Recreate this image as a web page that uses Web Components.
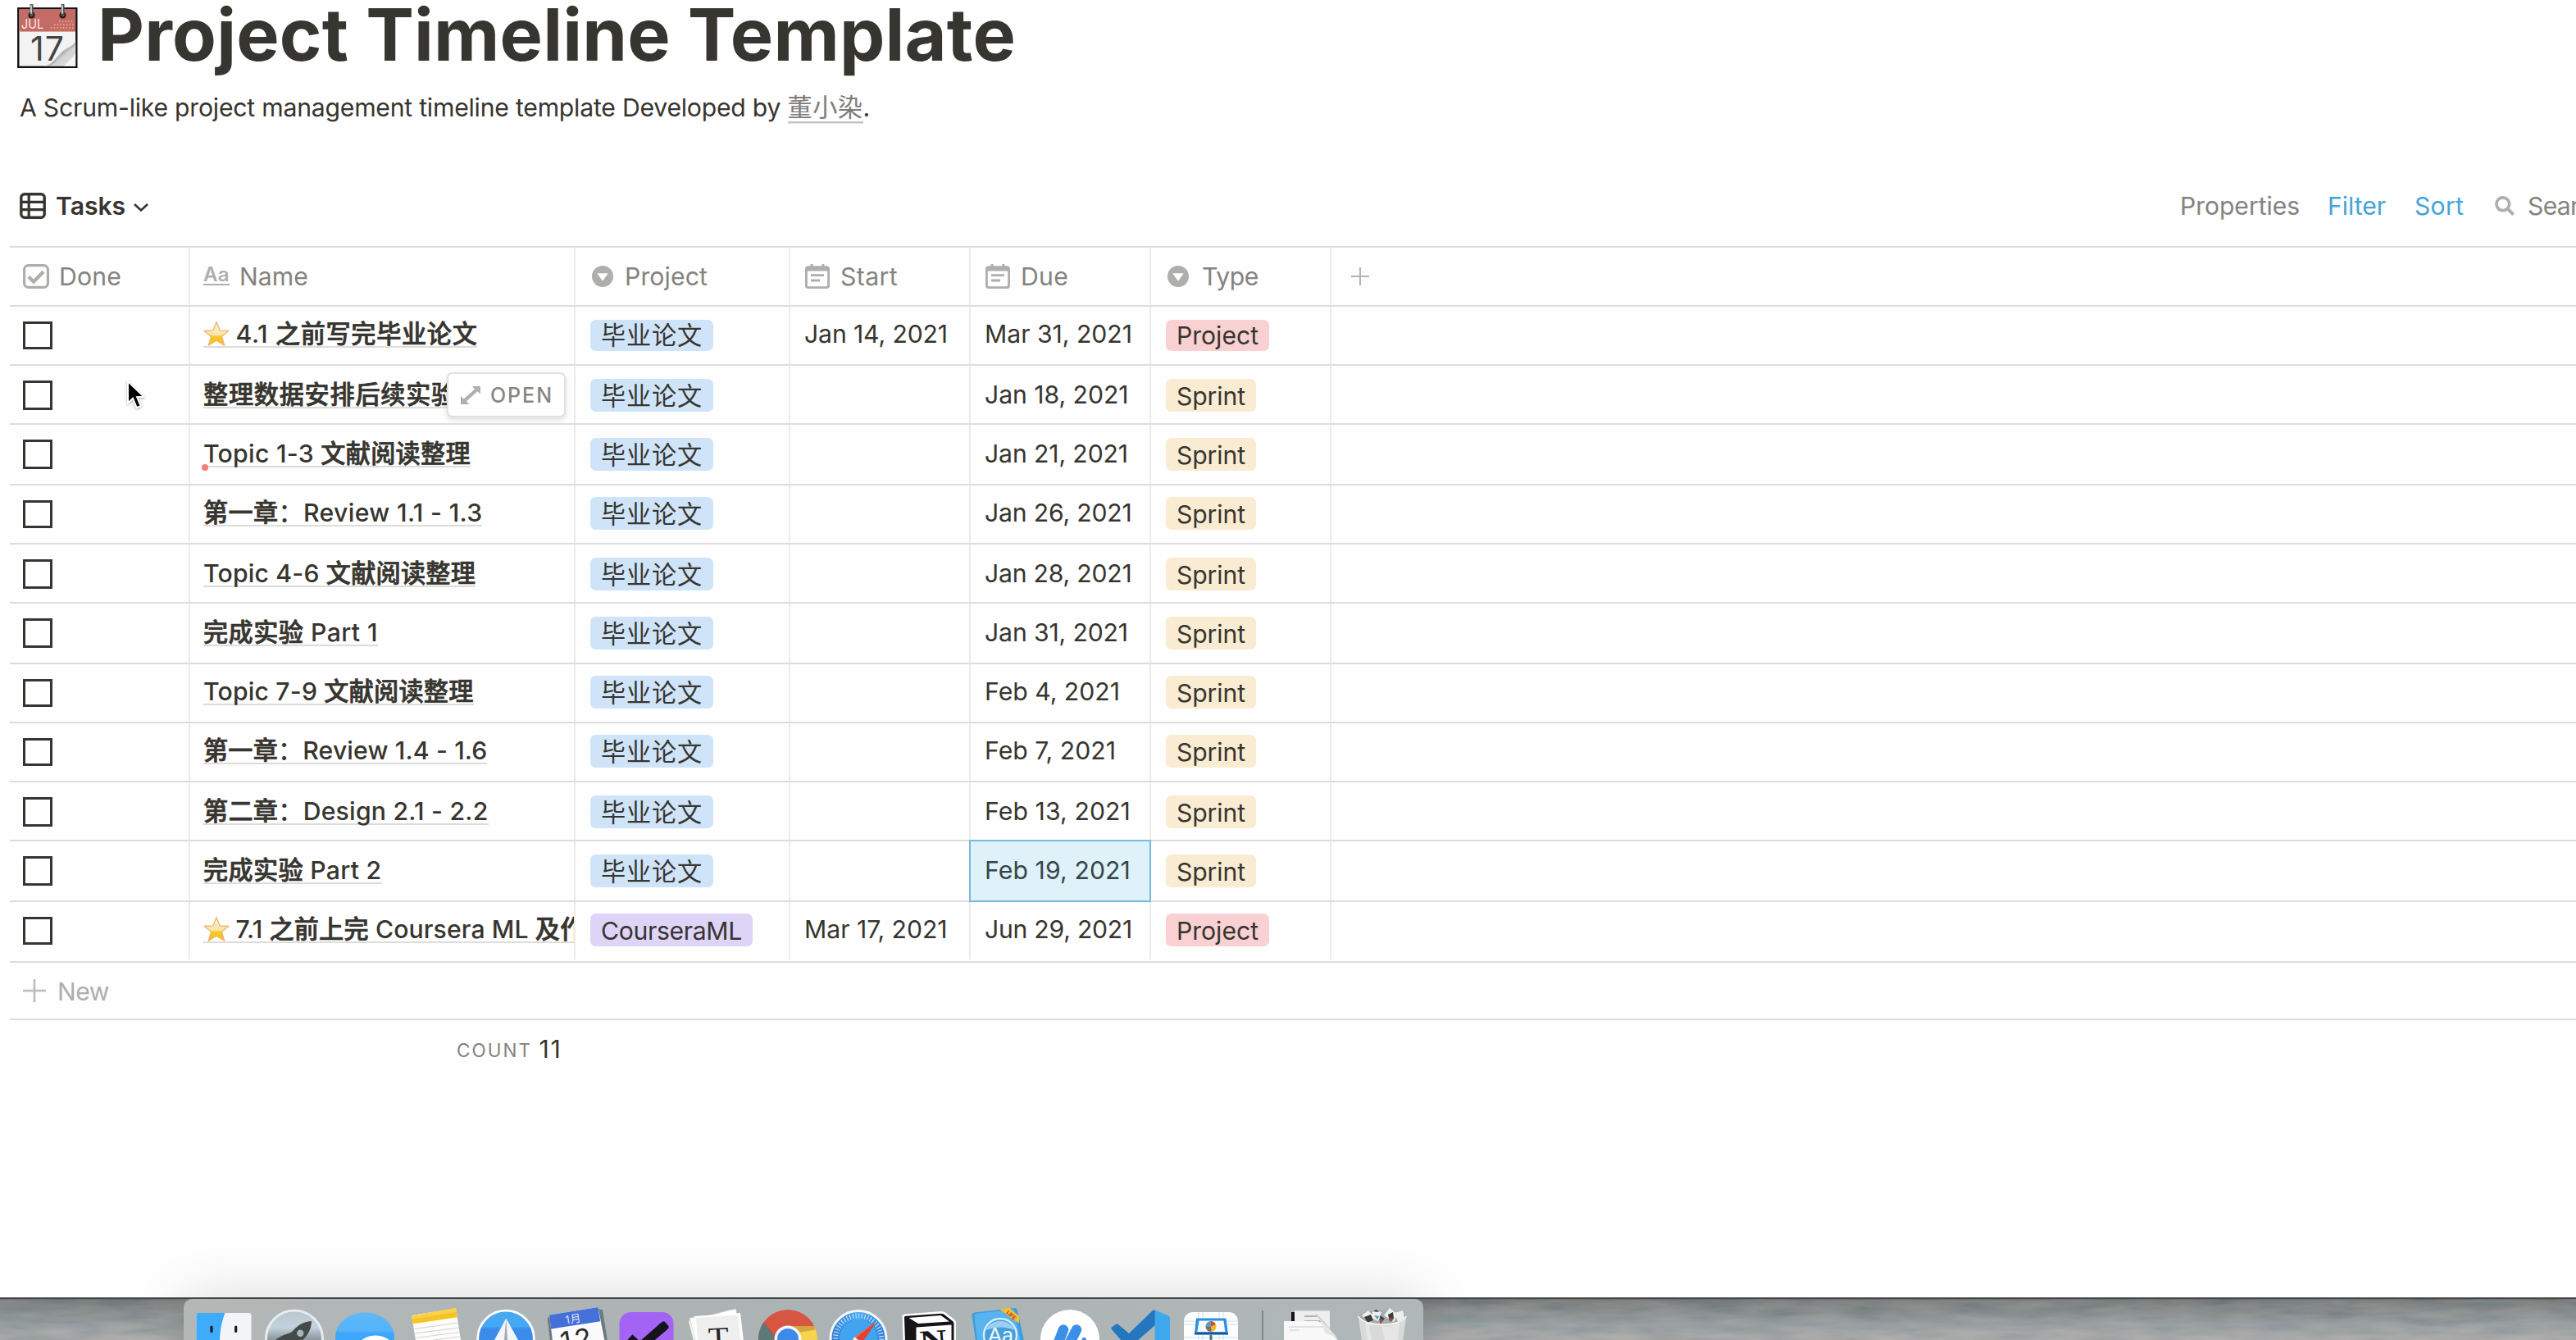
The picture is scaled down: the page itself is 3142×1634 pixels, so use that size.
<!DOCTYPE html>
<html lang="en">
<head>
<meta charset="utf-8">
<title>Project Timeline Template</title>
<style>
html,body{margin:0;height:100%}
body{width:3142px;height:1634px;overflow:hidden;background:#fefefe;color:#37352f;font-family:Inter,"Noto Sans CJK SC",sans-serif;font-size:30.2px;line-height:40px}
</style>
</head>
<body>
<timeline-app></timeline-app>
<script>
const define = (name, html, after) => customElements.define(name, class extends HTMLElement {
  constructor(){ super(); this.attachShadow({mode:'open'}); }
  connectedCallback(){
    this.shadowRoot.innerHTML = typeof html === 'function' ? html(this) : html;
    if (after) after(this);
  }
});

/* Text whose tracking is adjusted so that its advance equals the w attribute */
define('fit-text', `<style>:host{display:inline-block;white-space:pre;flex:none}span{display:inline-block}</style><span><slot></slot></span>`, el => {
  const w = +el.getAttribute('w'), n = [...el.textContent].length;
  const natural = el.shadowRoot.querySelector('span').getBoundingClientRect().width;
  if (w && n) el.style.letterSpacing = ((w - natural) / n).toFixed(3) + 'px';
});

const ICONS = {
  table: ['0 0 32 32', `<rect x="1.8" y="1.8" width="28.4" height="28.4" rx="4" fill="none" stroke="#37352f" stroke-width="3.4"/><path d="M2 11.3H30M2 20.7H30M11.2 2V30" stroke="#37352f" stroke-width="3.2" fill="none"/>`],
  chevron: ['0 0 20 12', `<path d="M2 2l8 7.5L18 2" fill="none" stroke="#37352f" stroke-width="2.6"/>`],
  search: ['0 0 24 24', `<circle cx="9.8" cy="9.8" r="7.9" fill="none" stroke="#aeaeac" stroke-width="3.6"/><path d="M15.6 15.6l7 7" stroke="#aeaeac" stroke-width="4"/>`],
  check: ['0 0 32 30', `<rect x="1.6" y="1.6" width="28.8" height="26.8" rx="5" fill="none" stroke="#aeaeac" stroke-width="3.2"/><path d="M6.8 15.5l6.2 6L25 9.3" fill="none" stroke="#aeaeac" stroke-width="4.4"/>`],
  select: ['0 0 26 26', `<circle cx="13" cy="13" r="13" fill="#aeaeac"/><path d="M6.2 9.2h13.6L13 18.8z" fill="#fff"/>`],
  date: ['0 0 30 30', `<path d="M4 2.2h2.6V0h3v2.2h10.8V0h3v2.2H26a4 4 0 0 1 4 4V26a4 4 0 0 1-4 4H4a4 4 0 0 1-4-4V6.200a4 4 0 0 1 4-4zM2.800 8.600V25.500a1.700 1.700 0 0 0 1.700 1.700h21a1.700 1.700 0 0 0 1.700-1.700V8.600z" fill="#aeaeac" fill-rule="evenodd"/><path d="M7 13.600h16M7 20h11" stroke="#aeaeac" stroke-width="2.800"/>`],
  plus: ['0 0 24 24', `<path d="M12 1v22M1 12h22" stroke="#b4b4b2" stroke-width="2"/>`],
  plusb: ['0 0 28 28', `<path d="M14 0v28M0 14h28" stroke="#bcbcba" stroke-width="2.6"/>`],
  open: ['0 0 24 22', `<path d="M14 0h10v9.500l-3.600-3.300L7 18.200 10.500 22H0V12l3.800 3.400L17 3.400z" fill="#b0b0ae"/>`],
  star: ['0 0 32 32', `<defs><linearGradient id="s" x1="0" y1="0" x2="0" y2="1"><stop offset="0" stop-color="#fdf3e6"/><stop offset=".55" stop-color="#fbe3a8"/><stop offset=".62" stop-color="#f8c822"/><stop offset="1" stop-color="#f6bd2a"/></linearGradient></defs><path d="M16 1.500l4 10.300 11 .5-8.500 6.900 3.200 11L16 24.200 6.300 30.200l3.200-11L1 12.300l11-.5z" fill="url(#s)" stroke="#e9b868" stroke-width="1.300" stroke-linejoin="round"/>`]
};
define('ui-icon', el => {
  const [vb, body] = ICONS[el.getAttribute('name')], [, , w, h] = vb.split(' ');
  return `<style>:host{display:block;flex:none;line-height:0}svg{display:block}</style><svg width="${w}" height="${h}" viewBox="${vb}">${body}</svg>`;
});

define('calendar-emoji', `<style>:host{display:block;width:76px;height:80px;flex:none}svg{display:block}</style>
<svg width="76" height="80" viewBox="20 5 76 80">
<defs><linearGradient id="c" x1=".35" y1=".4" x2="1" y2="1"><stop offset="0" stop-color="#777"/><stop offset=".3" stop-color="#ddd"/><stop offset="1" stop-color="#fff"/></linearGradient>
<linearGradient id="d" x1="0" y1="0" x2="1" y2="1"><stop offset=".4" stop-color="#fff"/><stop offset=".6" stop-color="#999"/><stop offset="1" stop-color="#444"/></linearGradient></defs>
<rect x="22.300" y="10.300" width="71" height="71.500" fill="#f3f3f3" stroke="#111" stroke-width="2.400"/>
<rect x="23.500" y="11.500" width="68.600" height="26.500" fill="#c46b67"/><path d="M23.500 38.500h68.600" stroke="#dba98c" stroke-width="1.200"/>
<text x="26" y="34.800" font-family="Inter" font-size="16" fill="#f9e9e7" textLength="27" lengthAdjust="spacingAndGlyphs">JUL</text>
<path d="M62 34h28M66 30h24M72 26h18" stroke="#e8b98c" stroke-width="1.400" stroke-dasharray="1.500 2.200"/>
<path d="M92.200 50C88 58 82 57 75 63 68 70 66 77 55 80.600H92.200z" fill="url(#d)"/>
<text x="37" y="74" font-family="Inter" font-size="41" fill="#444" textLength="41" lengthAdjust="spacing">17</text>
<path d="M92.200 54C86 61 80 59 75 65 70 72 67 78 58 80.600H92.200z" fill="url(#c)" opacity=".85"/><path d="M92 66L78 80.600h14z" fill="#f6f6f6"/>
<g><circle cx="38.500" cy="18.500" r="4" fill="#2a2020"/><circle cx="76.500" cy="18.500" r="4" fill="#2a2020"/><path d="M38.500 6v12M76.500 6v12" stroke="#555" stroke-width="4" stroke-linecap="round"/><path d="M38 7v9M76 7v9" stroke="#d5dadc" stroke-width="1.700" stroke-linecap="round"/></g>
</svg>`);

define('page-header', `<style>
:host{display:block}
.title{display:flex;align-items:flex-start;gap:23px;padding:5px 0 0 20px;height:101px}
h1{margin:0;font-size:88px;font-weight:700;line-height:74px}
p{margin:0;padding:0 0 0 24px;height:40px;display:flex;margin-top:5px}
.link{color:#7d7c78;background:linear-gradient(#c6c5c3,#c6c5c3) 0 37px/100% 2.500px no-repeat}
</style>
<div class="title"><calendar-emoji></calendar-emoji><h1><fit-text w="1120">Project Timeline Template</fit-text></h1></div>
<p><fit-text w="936.500">A Scrum-like project management timeline template Developed by </fit-text><fit-text class="link" w="92">董小染</fit-text><span>.</span></p>`);

define('view-bar', `<style>
:host{display:flex;align-items:flex-start;height:69px;padding:0 0 0 24px;margin-top:80px;white-space:nowrap}
.v{font-weight:600;margin-left:12px}
ui-icon{margin-top:4px}
.sp{flex:none;width:2477px}
.g{color:#84837f}.b{color:#47a3d9}
.bar{display:flex;width:600px;flex:none}
ui-icon[name=chevron]{margin:16px 0 0 9px}
ui-icon[name=search]{margin:8px 16px 0 38px}
</style>
<ui-icon name="table"></ui-icon><fit-text class="v" w="85">Tasks</fit-text><ui-icon name="chevron"></ui-icon><span class="sp"></span>
<div class="bar"><fit-text class="g" w="146">Properties</fit-text><fit-text class="b" w="71" style="margin-left:34px">Filter</fit-text><fit-text class="b" w="60" style="margin-left:35px">Sort</fit-text><ui-icon name="search"></ui-icon><fit-text class="g" w="96">Search</fit-text></div>`);

define('head-cell', `<style>
:host{display:flex;box-sizing:border-box;border-right:2px solid #ececeb;padding:14px 0 0 16px;color:#84837f;height:70px;flex:none;align-items:flex-start}
.t{margin:1px 0 0 var(--gap,16px)}
</style><slot name="icon"></slot><span class="t"><slot></slot></span>`);

define('type-icon', `<style>:host{display:block;font-size:24px;line-height:24px;font-weight:600;color:#aeaeac;border-bottom:2.500px solid #aeaeac;width:32px;height:23px}</style><fit-text w="32">Aa</fit-text>`);

define('option-tag', el => `<style>
:host{display:block;box-sizing:border-box;height:40px;line-height:40px;padding:1px 13px 0 13px;border-radius:6.600px;width:max-content;background:${({blue:'#cfe4f9',red:'#fad1d3',yellow:'#f9ecd3',purple:'#ded4f8'})[el.getAttribute('tone')]}}
</style><slot></slot>`);

define('check-box', `<style>:host{display:block;box-sizing:border-box;width:36px;height:36px;border:3.500px solid #37352f;background:#fff}</style>`);

const W = [220,470,262,220,220,220];
const ROWS = [
  [70,0,'4.1 之前写完毕业论文',295,1,'Jan 14, 2021',175,'Mar 31, 2021',180],
  [70,2,'整理数据安排后续实验',309,0,'',0,'Jan 18, 2021',175.5],
  [72,2,'Topic 1-3 文献阅读整理',326,0,'',0,'Jan 21, 2021',175],
  [70,0,'第一章：Review 1.1 - 1.3',340.5,0,'',0,'Jan 26, 2021',179.5],
  [70,2,'Topic 4-6 文献阅读整理',332,0,'',0,'Jan 28, 2021',179.5],
  [72,2,'完成实验 Part 1',213,0,'',0,'Jan 31, 2021',175],
  [70,0,'Topic 7-9 文献阅读整理',329.5,0,'',0,'Feb 4, 2021',165],
  [70,0,'第一章：Review 1.4 - 1.6',346.5,0,'',0,'Feb 7, 2021',160],
  [70,2,'第二章：Design 2.1 - 2.2',347.5,0,'',0,'Feb 13, 2021',178],
  [72,2,'完成实验 Part 2',217.5,0,'',0,'Feb 19, 2021',178],
  [72,0,'7.1 之前上完 Coursera ML 及作',426,1,'Mar 17, 2021',174.5,'Jun 29, 2021',180]
];
define('task-row', el => {
  const i = +el.getAttribute('index'), [h,s,name,nw,star,st,sw,due,dw] = ROWS[i];
  const last = i === 10, proj = i === 0 || last;
  return `<style>
:host{display:flex;height:${h}px;border-bottom:2px solid #dddddc;box-sizing:content-box}
.c{box-sizing:border-box;flex:none;border-right:2px solid #ececeb;height:${last ? 70 : h}px;padding:${13+s}px 0 0 17px;position:relative}
.k{padding:18px 0 0 16px}.t{padding:${i ? 14+s : 16}px 0 0 18px}
check-box{height:${s ? 36 : 34}px}
${i ? '' : 'option-tag{height:38px;padding-top:0;line-height:38px}'}
.n{padding-left:16px;overflow:hidden}
.n b{font-weight:500;-webkit-text-stroke:.7px currentColor}
.u{display:flex;width:max-content;font-weight:500;background:linear-gradient(#dcdcda,#dcdcda) 0 35px/100% 2px no-repeat}
.n ui-icon{margin:4px 7.500px 0 0}
.sel:after{content:"";position:absolute;left:-2px;top:-2px;right:-2px;bottom:-2px;border:2px solid #77bbdc;background:rgba(46,170,220,.15)}
.open{position:absolute;left:313px;top:8px;width:145px;height:55px;box-sizing:border-box;border:2px solid #e0e0df;border-radius:7px;background:#fff;box-shadow:0 3px 6px rgba(15,15,15,.13);display:flex;align-items:center;padding-left:15px;color:#878683;font-size:25px;font-weight:500}
.open ui-icon{margin:0 12px 0 0}
.dot{position:absolute;left:14px;top:48px;width:8px;height:8px;border-radius:50%;background:#f87c7a}
</style>
<div class="c k" style="width:${W[0]}px"><check-box></check-box></div>
<div class="c n" style="width:${W[1]}px"><div class="u">${star ? '<ui-icon name="star"></ui-icon>' : ''}<fit-text w="${nw}">${name.replace(/[\u4e00-\u9fff]+/g, m => `<b>${m}</b>`)}</fit-text></div>${i === 1 ? '<div class="open"><ui-icon name="open"></ui-icon><fit-text w="77">OPEN</fit-text></div>' : ''}${i === 2 ? '<i class="dot"></i>' : ''}</div>
<div class="c t" style="width:${W[2]}px">${last ? '<option-tag tone="purple"><fit-text w="172">CourseraML</fit-text></option-tag>' : '<option-tag tone="blue"><fit-text w="124">毕业论文</fit-text></option-tag>'}</div>
<div class="c" style="width:${W[3]}px">${st ? `<fit-text w="${sw}">${st}</fit-text>` : ''}</div>
<div class="c${i === 9 ? ' sel' : ''}" style="width:${W[4]}px"><fit-text w="${dw}">${due}</fit-text></div>
<div class="c t" style="width:${W[5]}px">${proj ? '<option-tag tone="red"><fit-text w="100">Project</fit-text></option-tag>' : '<option-tag tone="yellow"><fit-text w="84">Sprint</fit-text></option-tag>'}</div>`;
});

define('task-table', `<style>
:host{display:block;margin-left:12px;border-top:2px solid #dddddc}
.h{display:flex;height:70px;border-bottom:2px solid #dddddc}
.new{display:flex;height:68px;border-bottom:2px solid #dddddc;color:#aeaeac;box-sizing:content-box;padding-left:16px}
.new ui-icon{margin:20px 14px 0 0}.new fit-text{margin-top:15px}
.count{display:flex;justify-content:flex-end;width:673.500px;height:60px;padding-top:15px}
.count fit-text:first-child{font-size:22.500px;color:#84837f;margin:2px 8.500px 0 0}
</style>
<div class="h">
<head-cell style="width:220px;--gap:12px"><ui-icon slot="icon" name="check" style="margin-top:6px"></ui-icon><fit-text w="76">Done</fit-text></head-cell>
<head-cell style="width:470px;--gap:12px"><type-icon slot="icon" style="margin-top:7px"></type-icon><fit-text w="84">Name</fit-text></head-cell>
<head-cell style="width:262px;--gap:14px"><ui-icon slot="icon" name="select" style="margin:8px 0 0 4px"></ui-icon><fit-text w="101">Project</fit-text></head-cell>
<head-cell style="width:220px;--gap:13px"><ui-icon slot="icon" name="date" style="margin:6px 0 0 2px"></ui-icon><fit-text w="70">Start</fit-text></head-cell>
<head-cell style="width:220px;--gap:13px"><ui-icon slot="icon" name="date" style="margin:6px 0 0 2px"></ui-icon><fit-text w="58">Due</fit-text></head-cell>
<head-cell style="width:220px"><ui-icon slot="icon" name="select" style="margin:8px 0 0 4px"></ui-icon><fit-text w="69">Type</fit-text></head-cell>
<ui-icon name="plus" style="margin:23px 0 0 23px"></ui-icon>
</div>
${ROWS.map((r,i) => `<task-row index="${i}"></task-row>`).join('')}
<div class="new"><ui-icon name="plusb"></ui-icon><fit-text w="63">New</fit-text></div>
<div class="count"><fit-text w="92">COUNT</fit-text><fit-text w="28">11</fit-text></div>`);

const APPS = {
finder:`<rect x="9.500" y="17" width="67" height="50" rx="3" fill="#f2f4f8"/><path d="M12 17H44.500C40 28 38.500 40 38 50H9.500V19.500A2.500 2.500 0 0 1 12 17z" fill="#3fabfb"/><path d="M28 34v5.500M57.700 34v5.500" stroke="#1b1b1f" stroke-width="3.200" stroke-linecap="round"/>`,
launch:`<defs><linearGradient id="l" x1="0" y1="0" x2="0" y2="1"><stop offset="0" stop-color="#b9c6cf"/><stop offset=".3" stop-color="#c3d2dc"/><stop offset=".5" stop-color="#8f9aa2"/></linearGradient></defs><circle cx="43" cy="48.500" r="34.500" fill="url(#l)" stroke="#e4edf2" stroke-width="3"/><path d="M64 27C56 27.500 48 31 42 38 40 42 31 42 20.500 49.500V51H52C60 44 63.500 37 64 27z" fill="#444949"/><circle cx="50.300" cy="41.800" r="4.200" fill="#aab4ba"/>`,
messages:`<defs><linearGradient id="m" x1="0" y1="0" x2="0" y2="1"><stop offset="0" stop-color="#5fb8f8"/><stop offset=".38" stop-color="#55b2fa"/><stop offset=".42" stop-color="#3ea6fd"/></linearGradient></defs><ellipse cx="43" cy="46.500" rx="36" ry="30" fill="url(#m)"/><ellipse cx="56" cy="57" rx="20" ry="12.500" fill="#fff"/>`,
notes:`<path d="M14 20L68 11.300 74 50H19z" fill="#fdfdfc"/><path d="M17 36.500l54-7.500M17.500 42l54.500-7M18 47.500l55-7M40 50l33-4" stroke="#d5d5d3" stroke-width="1.200"/><path d="M14 20.500L66.500 11.300q2-.3 2.200 1.500l1 9.500L15.500 30.300z" fill="#f6c423"/><path d="M14 20.500L66.500 11.300q2-.3 2.200 1.500l.3 3L14.500 24.500z" fill="#f9d24d"/>`,
spark:`<defs><linearGradient id="k" x1="0" y1="0" x2="0" y2="1"><stop offset="0" stop-color="#4aa8ee"/><stop offset=".28" stop-color="#42a9f8"/><stop offset=".32" stop-color="#3b8bea"/></linearGradient></defs><circle cx="43" cy="48.500" r="34.300" fill="url(#k)" stroke="#fbfcfe" stroke-width="2.800"/><path d="M43.300 23.500L58.500 51H28.500z" fill="#f3f6f9"/><path d="M43.300 23.500L45 51H41z" fill="#9fa8b0"/>`,
calendar:`<path d="M7.700 24l3-4L15 51h-4zM70 12l5 1.500L81 51h-6z" fill="#6d7b81"/><path d="M10 19.500L69.500 10 77.500 51H14z" fill="#fbfbfb"/><path d="M10 19.500L69.500 10l2.700 17.300L12 36.500z" fill="#456fd9"/><g transform="rotate(-9 42 28)" font-family="Inter,'Noto Sans CJK SC',sans-serif"><text x="30" y="28.500" font-size="13" fill="#e3eaff" textLength="19">1月</text><text x="20" y="62" font-size="34" fill="#2b2b2b" textLength="38">12</text></g>`,
tick:`<rect x="9.500" y="16" width="66" height="60" rx="14" fill="#a364f6"/><path d="M33 60L63.500 33.500" stroke="#17131c" stroke-width="11"/><rect x="57.500" y="28.500" width="11" height="11" rx="3" fill="#17131c" transform="rotate(-41 63 34)"/><path d="M22 47l14 13" stroke="#17131c" stroke-width="10"/>`,
typora:`<path d="M8 27l50-13.500 7.800-1L70 51H14z" fill="#fff" stroke="#cfd1d1" stroke-width=".8"/><path d="M9 23l60-4 2 32H16z" fill="#fafafa" stroke="#ccc" stroke-width=".6"/><path d="M14.500 21L71 17l4 34H17z" fill="#fff"/><path d="M17 23l51.500-3.600 3 32H19z" fill="#efefef"/><text x="31.500" y="58" font-family="Liberation Serif" font-size="34" fill="#242424" textLength="25" lengthAdjust="spacingAndGlyphs" transform="rotate(-3 44 40)">T</text>`,
chrome:`<circle cx="43" cy="49" r="36" fill="#d65641"/><path d="M13.500 28.500A36 36 0 0 0 7 51H32z" fill="#5e7778"/><path d="M13.500 28.500L30 51H43L26 44z" fill="#bd4937"/><path d="M43 33.500H75.500A36 36 0 0 1 79 51H43z" fill="#f8d44d"/><path d="M43 33.500H75.500l1 4L56 41z" fill="#d3a73f"/><circle cx="43" cy="49" r="16.500" fill="#f4f5f6"/><circle cx="43" cy="49" r="13" fill="#3f8ae9"/>`,
safari:`<defs><linearGradient id="f" x1="0" y1="0" x2="1" y2="0"><stop offset="0" stop-color="#2f7fd5"/><stop offset=".5" stop-color="#46a9f2"/><stop offset="1" stop-color="#2f7fd5"/></linearGradient></defs><circle cx="43" cy="48.500" r="34" fill="url(#f)" stroke="#f5f8fa" stroke-width="3"/><circle cx="43" cy="48.500" r="28" fill="none" stroke="#cfe6fa" stroke-width="6" stroke-dasharray="1.100 2.565"/><circle cx="43" cy="48.500" r="23" fill="#42a4ee"/><path d="M64.600 27.700L48 53 38.500 46z" fill="#e5412f"/><path d="M64.600 27.700L38.500 46l-3 5z" fill="#f26e5b"/><path d="M38.500 46l7 7H34z" fill="#f1f4f6"/>`,
notion:`<path d="M10.500 21q0-2 2.500-2.500L58 15q3 0 5 1.500L74 25q2 1.500 2 4V51H11.500z" fill="#fff"/><path d="M13 22.500q0-1.500 2-1.700L58 17.800q2 0 3.500 1L72 27q1.500 1 1.500 3V51H14z" fill="#161616"/><path d="M18.500 23l39-3 10.500 7.500L30 30z" fill="#fff"/><path d="M27.500 34.500l43-3V51h-43z" fill="#fff"/><text x="31" y="62" font-family="Liberation Serif" font-weight="700" font-size="35" fill="#161616" textLength="33" lengthAdjust="spacingAndGlyphs" transform="rotate(-4 47 40)">N</text>`,
dict:`<path d="M9.500 20q0-3 3-3.500L62 11q2.500 0 3 3l8 37H14z" fill="#3e9be2"/><path d="M12.500 20.500q0-2.500 3-3L60 13l9 38H16z" fill="#58b4ee"/><path d="M43 12.500l12.500-1.500L67 21v9z" fill="#f4c12c"/><text x="51" y="17" font-family="Inter" font-weight="700" font-size="6.500" fill="#c33" transform="rotate(42 51 17)">LIFE</text><circle cx="44" cy="44" r="20" fill="#4a9fda" stroke="#d9eefb" stroke-width="2.400"/><path d="M26 38a20 20 0 0 1 36 0q-16-7-36 0z" fill="#9bd0f2"/><text x="29" y="53" font-family="Liberation Sans" font-size="26" fill="#eef8ff" textLength="31" lengthAdjust="spacingAndGlyphs">Aa</text>`,
drops:`<circle cx="43" cy="49" r="36" fill="#fff"/><path d="M35 37.500L29 53M51 37.500L43 53" stroke="#3a8fe8" stroke-width="12.500" stroke-linecap="round"/><path d="M57 51q1-5 4-4t2 5z" fill="#3a8fe8"/>`,
code:`<path d="M7.500 36.500q-.5-1.500 1-2.500l4.500-3.300q1.500-.8 3 .4L29 42 57.500 14.500q1.500-1.300 3.500-.8V32L39 51H20z" fill="#2477be"/><path d="M60.600 13.500L77 20.300q2 1 2 3.200V51H60.600z" fill="#3ea8ef"/>`,
keynote:`<rect x="10" y="16" width="66" height="60" rx="11" fill="#fdfdfd"/><path d="M28 16v34M33 16v34M53 16v34M58 16v34M10 27h66M10 31h66M10 47h66" stroke="#c9e2f4" stroke-width="1"/><path d="M25 23.500H61.500L64 43.500H22.800z" fill="#2b8de3"/><path d="M28.500 26.500H58.500L60.300 40H26.300z" fill="#f7f9fb"/><circle cx="43" cy="33.500" r="6.500" fill="#f1b928"/><path d="M43 33.500V27a6.500 6.500 0 0 0-6.500 6.500z" fill="#4ba0de"/><path d="M43 33.500V27a6.500 6.500 0 0 1 5.500 4z" fill="#d6443c"/><path d="M43 33.500h-6.500a6.500 6.500 0 0 0 7 6.300z" fill="#77706b"/><path d="M23 42.300h41" stroke="#1a4f82" stroke-width="2"/><path d="M43 44v7" stroke="#5b6c7b" stroke-width="3"/>`,
docs:`<path d="M18 16h8v12h-8z" fill="#141414"/><path d="M22 14.300H65V45L45 30H22z" fill="#eee"/><path d="M34 21h15M34 27h20" stroke="#777" stroke-width="1.200"/><path d="M9 27H51L76 51H9z" fill="#f8f8f8"/><path d="M15 34h43M15 38h13" stroke="#ccc" stroke-width="1.200"/><path d="M47 17C52 26 60 30 60 42 66 40 72 44 76 51 66 38 57 25 47 17z" fill="#b9b9b9"/><path d="M47 17C56 27 56 35 60 42L74 47z" fill="#e4e4e4"/>`,
trash:`<ellipse cx="43" cy="22" rx="29" ry="9" fill="#a9acac"/><path d="M18 20l8-6 6 7-3 8zM32 13l10 3-4 11-9-4zM45 20l7-9 10 8-5 9zM58 17l10-3 2 9-8 5z" fill="#eee"/><path d="M21 22l8-3 3 7-7 3zM40 20l6 4-5 5zM50 19l6-3 1 8-5 3zM31 15l5-2 3 3z" fill="#3a3c3e"/><path d="M33 20l6 1-2 4zM42 24l3 3-5 2z" fill="#4a9bd0"/><path d="M39 24l5 2-3 5zM52 22l5 2-3 4z" fill="#a24a40"/><path d="M13.700 21Q20 31 43 31T72.400 21L68 51H18z" fill="#d8d9d9"/><path d="M22 28l3 23h5l-3-21zM42 31q6 7 22-3l-2 23H46z" fill="#e6e6e6"/><path d="M13.700 21Q20 31 43 31T72.400 21" fill="none" stroke="#f5f5f5" stroke-width="1.500"/>`
};
define('dock-icon', el => `<style>:host{display:block;flex:none;width:86.050px;height:50px}svg{display:block;overflow:hidden}</style><svg width="86.050" height="50" viewBox="0 0 86.050 50">${APPS[el.getAttribute('app')]}</svg>`);

define('dock-bar', `<style>
:host{display:flex;box-sizing:border-box;width:1512px;height:130px;padding-left:5.700px;border-radius:10px;background:linear-gradient(90deg,#b3b7b6,#acb3b5 50%,#b0b7b9);box-shadow:0 0 66px rgba(0,0,0,.155)}
.sep{width:2px;height:60px;background:#80878a;margin:14px 16px 0 19px;flex:none}
</style>${['finder','launch','messages','notes','spark','calendar','tick','typora','chrome','safari','notion','dict','drops','code','keynote'].map(a => `<dock-icon app="${a}"></dock-icon>`).join('')}<span class="sep"></span><dock-icon app="docs"></dock-icon><dock-icon app="trash"></dock-icon>`);

define('desktop-strip', `<style>
:host{display:grid;height:52px;position:relative;z-index:1;background:linear-gradient(#454746 0 2px,#696c6c 3px,#7e8484 40%,#8f9799 68%,#a09f9e 92%)}
svg,dock-bar{grid-area:1/1}
svg{width:3142px;height:50px;margin-top:2px}
dock-bar{margin:2px 0 0 224px}
</style><svg viewBox="0 0 3142 50"><filter id="n" x="0" y="0" width="100%" height="100%"><feTurbulence type="fractalNoise" baseFrequency=".016 .09" numOctaves="3" seed="4"/><feColorMatrix values="1.100 0 0 0 0  .9 .2 0 0 .03  .7 .1 .3 0 .04  0 0 0 0 .2"/></filter><rect width="3142" height="50" filter="url(#n)"/></svg><dock-bar></dock-bar>`);

define('mouse-cursor', `<style>:host{display:block;position:absolute;left:153px;top:463px;z-index:2}svg{display:block}</style>
<svg width="26" height="40" viewBox="0 0 26 40"><path d="M3 2v26.500l6-5.700 4.700 11.400 5-2.100-4.600-11 8.400-.3z" fill="#000" stroke="#fff" stroke-width="2" style="filter:drop-shadow(0 1px 1.500px rgba(0,0,0,.35))"/></svg>`);

define('timeline-app', `<style>
:host{display:flex;flex-direction:column;width:3142px;height:1634px;overflow:hidden;position:relative}
main{flex:1;min-height:0;overflow:hidden}
desktop-strip{flex:none}
</style><main><page-header></page-header><view-bar></view-bar><task-table></task-table></main><desktop-strip></desktop-strip><mouse-cursor></mouse-cursor>`);
</script>
</body>
</html>
